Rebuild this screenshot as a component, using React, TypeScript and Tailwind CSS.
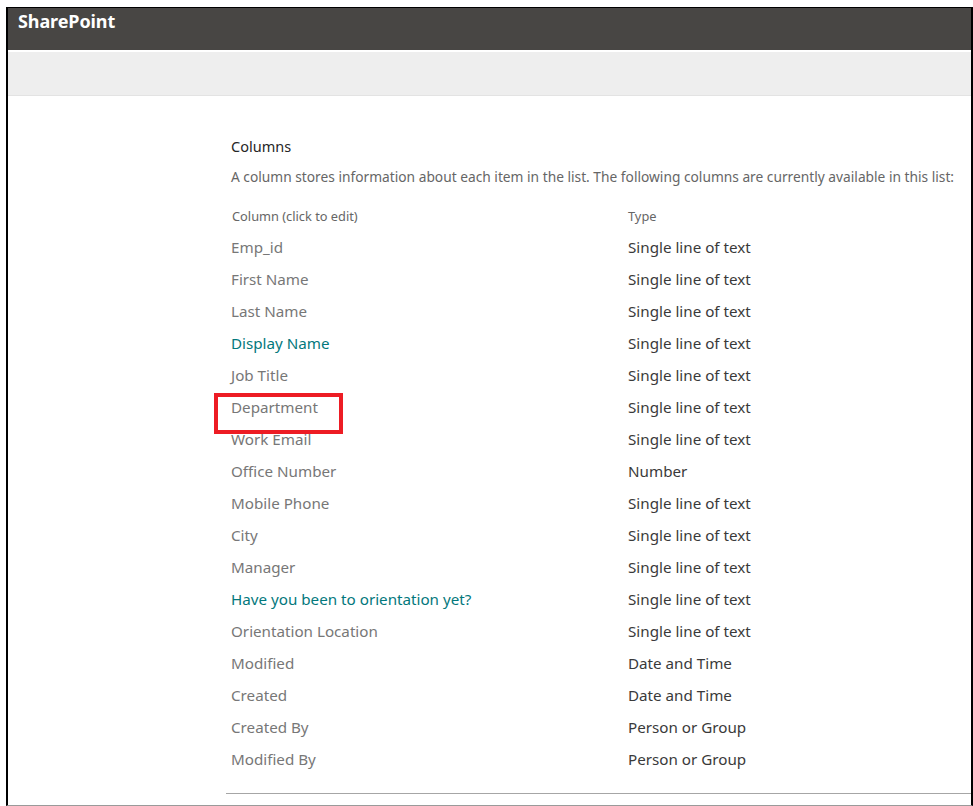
const columns: { name: string; type: string; link?: boolean }[] = [
  { name: 'Emp_id', type: 'Single line of text' },
  { name: 'First Name', type: 'Single line of text' },
  { name: 'Last Name', type: 'Single line of text' },
  { name: 'Display Name', type: 'Single line of text', link: true },
  { name: 'Job Title', type: 'Single line of text' },
  { name: 'Department', type: 'Single line of text' },
  { name: 'Work Email', type: 'Single line of text' },
  { name: 'Office Number', type: 'Number' },
  { name: 'Mobile Phone', type: 'Single line of text' },
  { name: 'City', type: 'Single line of text' },
  { name: 'Manager', type: 'Single line of text' },
  { name: 'Have you been to orientation yet?', type: 'Single line of text', link: true },
  { name: 'Orientation Location', type: 'Single line of text' },
  { name: 'Modified', type: 'Date and Time' },
  { name: 'Created', type: 'Date and Time' },
  { name: 'Created By', type: 'Person or Group' },
  { name: 'Modified By', type: 'Person or Group' },
];

export default function App() {
  return (
    <div className="w-[973px] h-[806px] bg-white pl-[6px] pt-[7px] font-['Noto_Sans',sans-serif] overflow-hidden">
      <div className="h-[799px] border-l-2 border-t border-r-2 border-black border-b border-b-[#9a9a9a] flex flex-col">
        {/* Suite bar */}
        <div className="h-[42px] bg-[#484644] px-[10px] shrink-0">
          <span className="text-white font-bold text-[18px] leading-[26px] tracking-[-0.1px]">SharePoint</span>
        </div>
        <div className="h-[2px] bg-white shrink-0" />
        <div className="h-[44px] bg-[#eeeeee] border-b border-[#e3e3e3] shrink-0" />

        {/* Main */}
        <div className="flex-1 pl-[223px] pt-[38px] flex flex-col">
          <h2 className="text-[14.5px] text-[#262626] leading-[24px]">Columns</h2>
          <p className="mt-[9px] text-[13.75px] text-[#666666] leading-[20px] whitespace-nowrap">
            A column stores information about each item in the list. The following columns are currently available in this list:
          </p>

          <div className="mt-[19px] flex text-[12.8px] text-[#666666] leading-[20px] pl-px">
            <div className="w-[396px]">Column (click to edit)</div>
            <div>Type</div>
          </div>

          <div className="mt-[5px] flex flex-col">
            {columns.map((c) => (
              <div key={c.name} className="flex h-[32px] items-center text-[15.2px] leading-[20px]">
                <div className="w-[397px] relative">
                  <span className={c.link ? 'text-[#03787c]' : 'text-[#777777]'}>{c.name}</span>
                  {c.name === 'Department' && (
                    <div className="absolute left-[-17px] top-[-4px] w-[129px] h-[41px] border-4 border-[#ed1c24]" />
                  )}
                </div>
                <div className="text-[#3a3a3a]">{c.type}</div>
              </div>
            ))}
          </div>

          <div className="mt-[18px] ml-[-5px] border-t border-[#a6a6a6]" />
        </div>
      </div>
    </div>
  );
}
